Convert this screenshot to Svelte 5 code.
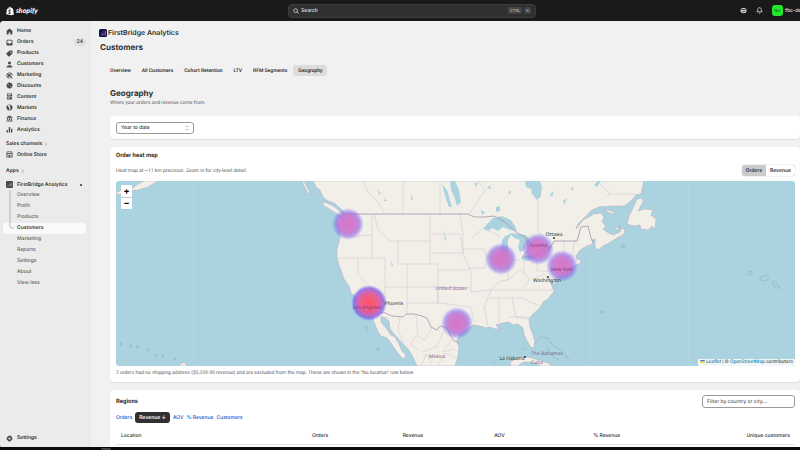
<script lang="ts">
  type NavItem = { label: string; icon: string; badge?: string };

  const mainNav: NavItem[] = [
    { label: "Home", icon: "home" },
    { label: "Orders", icon: "orders", badge: "24" },
    { label: "Products", icon: "products" },
    { label: "Customers", icon: "customers" },
    { label: "Marketing", icon: "marketing" },
    { label: "Discounts", icon: "discounts" },
    { label: "Content", icon: "content" },
    { label: "Markets", icon: "markets" },
    { label: "Finance", icon: "finance" },
    { label: "Analytics", icon: "analytics" },
  ];

  // 16x16 icons, filled with evenodd
  const icons: Record<string, string> = {
    home: "M8 1 L14.5 6.5 V13 a2 2 0 0 1-2 2 H10 V10.5 H6 V15 H3.500 a2 2 0 0 1-2-2 V6.500 Z",
    orders: "M4 1.500 H12 a3 3 0 0 1 3 3 V12 a3 3 0 0 1-3 3 H4 a3 3 0 0 1-3-3 V4.500 a3 3 0 0 1 3-3 Z M3 4.500 V9 H5.500 L7 11 H9 L10.500 9 H13 V4.500 a1 1 0 0 0-1-1 H4 a1 1 0 0 0-1 1 Z",
    products: "M8 1 H13 a2 2 0 0 1 2 2 V7.500 L8.500 14.500 a2 2 0 0 1-3 0 L1.500 10.500 a2 2 0 0 1 0-3 Z M11 3.500 a1.500 1.500 0 1 0 .1 0 Z",
    customers: "M8 1 a3.500 3.500 0 1 1-.1 0 Z M1.500 15 C1.500 11 4 9.500 8 9.500 S14.500 11 14.500 15 Z",
    marketing: "M8 1 a7 7 0 0 1 7 7 H13 a5 5 0 1 0-5 5 V15 A7 7 0 0 1 8 1 Z M8 4.500 A3.500 3.500 0 0 1 11.500 8 H9.500 L9 9.500 L7.500 11.500 A3.500 3.500 0 0 1 8 4.500 Z M9 9 L15 11 L12.800 12.300 L15 14.500 L14 15.500 L12 13.200 L10.800 15 Z",
    discounts: "M8 .5 L10 2.300 L12.800 2.200 L13.500 5 L15.500 7 L14.200 9.500 L14.300 12.200 L11.500 13 L9.500 15.300 L7 14.300 L4 14.500 L3 12 L.8 10 L1.800 7.500 L1.500 4.500 L4.200 3.500 L6 1.300 Z M6 5 a1 1 0 1 0 .1 0 Z M10 9 a1 1 0 1 0 .1 0 Z",
    content: "M4 1 H12 a2 2 0 0 1 2 2 V8 H2 V3 a2 2 0 0 1 2-2 Z M4 3 V6.500 L7 4.500 L9 6.500 L12 3 Z M2 9.500 H14 V13 a2 2 0 0 1-2 2 H4 a2 2 0 0 1-2-2 Z M4 11 V12.500 H9 V11 Z",
    markets: "M8 1 A7 7 0 1 1 7.900 1 Z M5 3 L4 6 L7 7.500 L8 10 L6.500 13.500 L8.500 13.800 L11 10 L9 7 L10 4 L8 2.800 Z",
    finance: "M8 1 L15 5 V6.500 H1 V5 Z M2.500 7.500 H5 V11.500 H2.500 Z M6.700 7.500 H9.300 V11.500 H6.700 Z M11 7.500 H13.500 V11.500 H11 Z M1 12.500 H15 V15 H1 Z",
    analytics: "M1.500 9 H4.500 V15 H1.500 Z M6.300 2 H9.600 V15 H6.300 Z M11.500 6 H14.500 V15 H11.500 Z",
    store: "M2 1 H14 L15 6 V13 a2 2 0 0 1-2 2 H3 a2 2 0 0 1-2-2 V6 Z M3 3 V5 H13 V3 Z M3 7.500 V13 H6 V9 H10 V13 H13 V7.500 Z",
    gear: "M6.500 1 H9.500 L10 3 L12 2.500 L14 5 L13 7 L15 8 L14 11 L12 11.500 L11.500 14 L9.500 15 L8 13.500 L6.500 15 L4 13.500 V11.500 L1.500 10.500 L1 7.500 L3 6.500 L2.500 4 L5 2.700 L6.500 3 Z M8 5.500 a2.500 2.500 0 1 0 .1 0 Z",
  };

  const appPages = ["Overview", "Profit", "Products", "Customers", "Marketing", "Reports", "Settings", "About", "View less"];
  const tabs = ["Overview", "All Customers", "Cohort Retention", "LTV", "RFM Segments", "Geography"];
  const sortKeys = ["Orders", "Revenue", "AOV", "% Revenue", "Customers"];
  const columns = ["Location", "Orders", "Revenue", "AOV", "% Revenue", "Unique customers"];

  const hotspots = [
    { x: 348, y: 224, r: 16, hot: false },
    { x: 369, y: 303, r: 18, hot: true },
    { x: 457, y: 323, r: 16, hot: false },
    { x: 501, y: 259, r: 16, hot: false },
    { x: 538, y: 249, r: 16, hot: false },
    { x: 562, y: 266, r: 16, hot: false },
  ];

  let activeTab = $state("Geography");
  let metric = $state("Orders");
  let sortBy = $state("Revenue");
  let filter = $state("");
</script>

{#snippet icon(name: string)}
  <svg class="icon" viewBox="0 0 16 16" aria-hidden="true"><path d={icons[name]} fill-rule="evenodd" /></svg>
{/snippet}

<div class="shell">
  <header class="topbar">
    <a class="logo" href="#home">
      <svg viewBox="0 0 16 18" aria-hidden="true">
        <path fill="#fff" d="M1.800 5 L4.500 4.200 C5 2 6.500 .5 8 .7 C9 .6 9.600 1.500 10 2.600 L11 2.300 L12.500 4 L14 4.200 L15.700 16 L11 17.500 L.3 15.500 Z" />
        <path fill="#1a1a1a" d="M9.800 6.500 L9.100 8.500 C7.500 7.800 6.500 8.300 6.600 9 C6.700 10 9.400 10.300 9.300 12.700 C9.200 15 6.600 15.600 4.500 14 L5 12.300 C6 13.200 7.200 13.400 7.300 12.600 C7.300 11.500 5 11.200 5 9 C5 6.700 7.300 5.500 9.800 6.500 Z M5.600 3.900 L8.800 2.900 C8.300 1 6.200 1.600 5.600 3.900 Z" />
      </svg>
      <span>shopify</span>
    </a>
    <button class="search">
      <svg viewBox="0 0 16 16" aria-hidden="true"><circle cx="7" cy="7" r="5" /><path d="M11 11 L15 15" /></svg>
      <span>Search</span>
      <kbd>CTRL</kbd><kbd>K</kbd>
    </button>
    <div class="account">
      <button class="bar-icon" aria-label="Sidekick">
        <svg viewBox="0 0 16 16"><path d="M2 5 Q3 2 8 2 T14 5 L15 9 Q14 14 8 14 T1 9 Z" fill="#ddd" /><path d="M3 6 H13 M5 10 Q8 12.500 11 10" stroke="#1a1a1a" stroke-width="2" fill="none" /></svg>
      </button>
      <button class="bar-icon" aria-label="Notifications">
        <svg viewBox="0 0 16 16"><path d="M8 1.500 C5 1.500 4 4 4 7 L2 11 H14 L12 7 C12 4 11 1.500 8 1.500 Z M6 13 Q8 16 10 13" stroke="#ddd" stroke-width="1.800" fill="none" /></svg>
      </button>
      <button class="user"><span class="avatar">fbc</span><span class="user-name">fbc-dev</span></button>
    </div>
  </header>

  <div class="body">
    <nav class="sidebar">
      <ul class="main-nav">
        {#each mainNav as item}
          <li>
            <a href="#{item.icon}">{@render icon(item.icon)}<span>{item.label}</span>
              {#if item.badge}<span class="badge">{item.badge}</span>{/if}
            </a>
          </li>
        {/each}
      </ul>

      <a class="group" href="#channels">Sales channels <svg viewBox="0 0 8 8"><path d="M2 1 L5 4 L2 7" /></svg></a>
      <a class="row" href="#store">{@render icon("store")}<span>Online Store</span></a>
      <a class="group apps" href="#apps">Apps <svg viewBox="0 0 8 8"><path d="M2 1 L5 4 L2 7" /></svg></a>
      <a class="row" href="#firstbridge">
        <svg class="icon" viewBox="0 0 16 16"><rect width="16" height="16" rx="3" /><path d="M4 12 V10 M7 12 V8 M10 12 V6 M13 12 V4" stroke="#aaa" stroke-width="1.500" /></svg>
        <span>FirstBridge Analytics</span>
        <span class="dot"></span>
      </a>
      <ul class="sub-nav">
        {#each appPages as page}
          <li><a href="#app-{page}" class:current={page === "Customers"}>{page}</a></li>
        {/each}
        <svg class="branch" viewBox="0 0 6 42" aria-hidden="true"><path d="M1 0 V36 Q1 38 3 38 H5" /></svg>
      </ul>
      <a class="row settings" href="#settings">{@render icon("gear")}<span>Settings</span></a>
    </nav>

    <main>
      <div class="app-name">
        <svg viewBox="0 0 16 16" aria-hidden="true"><rect width="16" height="16" rx="3" fill="#15133f" /><path d="M4 13 V11 M7 13 V9 M10 13 V7 M13 13 V4" stroke="#7d63dd" stroke-width="1.800" /><path d="M3 9 L12 3" stroke="#5548b0" /></svg>
        <span>FirstBridge Analytics</span>
      </div>
      <h1>Customers</h1>

      <div class="content">
        <div class="tabs">
          {#each tabs as tab}
            <button class:active={tab === activeTab} onclick={() => (activeTab = tab)}>{tab}</button>
          {/each}
        </div>

        <h2>Geography</h2>
        <p class="lead">Where your orders and revenue come from.</p>

        <section class="card range">
          <div class="select">
            <select aria-label="Date range"><option>Year to date</option></select>
            <svg viewBox="0 0 8 12" aria-hidden="true"><path d="M1.500 4 L4 1.500 L6.500 4 M1.500 8 L4 10.500 L6.500 8" /></svg>
          </div>
        </section>

        <section class="card heat">
          <h3>Order heat map</h3>
          <div class="heat-head">
            <p>Heat map at ~11 km precision. Zoom in for city-level detail.</p>
            <div class="segmented">
              {#each ["Orders", "Revenue"] as m}
                <button class:active={m === metric} onclick={() => (metric = m)}>{m}</button>
              {/each}
            </div>
          </div>

          <div class="map">
            <svg class="tiles" viewBox="116 181 679 185" preserveAspectRatio="xMidYMid slice" role="img" aria-label="Order heat map of North America">
              <defs>
                <radialGradient id="warm">
                  <stop offset="0" stop-color="#d66fc2" stop-opacity=".95" />
                  <stop offset=".55" stop-color="#c873cf" stop-opacity=".9" />
                  <stop offset=".75" stop-color="#8d66e4" stop-opacity=".6" />
                  <stop offset="1" stop-color="#6a5cff" stop-opacity="0" />
                </radialGradient>
                <radialGradient id="hot">
                  <stop offset="0" stop-color="#ff4a62" stop-opacity=".95" />
                  <stop offset=".4" stop-color="#f2557c" stop-opacity=".95" />
                  <stop offset=".7" stop-color="#c05bc0" stop-opacity=".9" />
                  <stop offset=".83" stop-color="#6f50e6" stop-opacity=".7" />
                  <stop offset="1" stop-color="#6a5cff" stop-opacity="0" />
                </radialGradient>
              </defs>
              <rect x="116" y="181" width="679" height="185" fill="#aad3df" />
              <path class="seam" d="M194 181 V366 M590 252 V366 M689 181 V366" />

              <g class="land">
                <path d="M313 181 L316 187 L320 190 L323 197 L328 201 L334 203 L340 208 L344 213 L346 217 L343 219 L337 217 L338 223 L340 229 L340 238 L337 249 L337 257 L339 265 L342 273 L344 279 L349 286 L351 293 L356 297 L357 303 L364 305 L367 310 L372 315 L374 322 L378 332 L381 336 L387 338 L391 343 L397 352 L401 357 L404 359 L406 355 L402 351 L398 342 L395 337 L391 335 L386 328 L381 322 L381 317 L385 318 L389 321 L390 329 L396 336 L402 343 L408 349 L413 357 L417 366 H455 L458 356 L459 348 L457 340 L460 334 L466 330 L473 325 L480 326 L486 328 L490 327 L495 329 L499 329 L496 325 L503 323 L509 322 L513 325 L518 324 L523 328 L524 334 L527 341 L531 347 L534 348 L535 342 L533 335 L530 327 L529 319 L533 314 L540 308 L543 302 L548 299 L551 295 L554 292 L552 286 L549 278 L553 282 L556 286 L555 278 L559 276 L563 271 L568 269 L574 266 L581 263 L580 259 L577 260 L576 256 L580 250 L587 246 L593 244 L592 240 L595 239 L595 247 L598 250 L603 246 L609 243 L617 238 L624 234 L625 230 L622 228 L620 232 L613 235 L607 232 L603 229 L606 226 L602 222 L604 217 L601 213 L594 214 L583 220 L576 229 L578 224 L585 217 L592 210 L599 207 L612 206 L624 206 L631 201 L636 195 L641 194 L644 181 Z" />
                <path d="M302 181 L304 181 L307 187 L311 194 L308 193 L304 186 Z M322 202 L327 203 L335 207 L343 214 L345 217 L339 215 L331 210 L324 206 Z" />
                <path d="M642 198 L643 202 L638 211 L644 209 L653 210 L651 215 L656 219 L655 229 L652 226 L648 230 L641 229 L640 225 L634 226 L627 224 L629 216 L633 208 L637 199 Z M604 209 L612 211 L616 214 L609 213 Z M613 226 L619 228 L621 226 L617 230 Z" />
                <path d="M116 193 L124 188 L130 190 L138 184 L144 181 H158 L148 187 L138 190 L129 191 L118 195 Z" />
                <path d="M510 362 L518 358 L528 357 L539 360 L548 363 L553 366 H541 L532 362 L523 362 L518 366 H511 Z M179 365 L184 362 L187 366 H180 Z" />
              </g>

              <g class="water">
                <path d="M483 229 L487 224 L493 218 L502 216 L511 220 L515 226 L517 231 L510 230 L503 227 L498 231 L492 228 L488 231 Z" />
                <path d="M502 241 L505 236 L512 233 L508 240 L508 253 L505 260 L502 258 L501 250 Z" />
                <path d="M510 233 L518 234 L526 235 L532 243 L526 243 L524 250 L520 252 L518 247 L520 240 L514 238 Z" />
                <path d="M521 259 L527 254 L534 255 L541 252 L536 258 L527 261 Z M539 250 L544 246 L552 246 L549 250 L542 252 Z" />
                <path d="M525 181 H540 L542 187 L541 196 L537 200 L532 194 L531 189 L526 187 Z" />
                <path d="M442 184 L447 190 L449 197 L452 207 L449 207 L446 199 Z M450 181 H455 L459 190 L461 202 L457 206 L454 196 L451 190 Z M496 207 L500 206 L500 211 L496 212 Z M481 210 L485 212 L482 215 Z" />
                <path d="M390 260 L393 265 L392 267 Z M443 229 L445 236 L447 241 L445 240 Z M594 185 L598 181 H601 L597 187 Z M563 201 L567 198 L564 205 Z M571 188 L574 187 L572 191 Z M487 188 L490 185 L491 189 Z M377 188 L381 194 L379 194 Z M411 194 L413 199 L411 200 Z M384 199 L388 201 L384 201 Z M550 194 L554 191 L552 197 Z M474 184 L478 182 L476 187 Z M508 192 L511 190 L510 195 Z" />
              </g>

              <path class="states" d="M362 181 L369 193 L377 201 L385 214 M403 181 V214 M440 181 V214 M478 181 L485 190 M485 190 L469 214 M538 200 V232 L545 238 M338 234 L346 237 L372 235 M372 214 V258 M374 214 L378 230 L387 238 L390 241 H398 V264 H438 V303 H407 M338 258 H385 V305 M358 258 V275 L385 302 L383 312 M398 241 H430 M430 214 V264 M430 234 H460 L463 253 H430 M460 214 L463 234 V253 L470 270 H438 M385 287 H438 L471 288 M407 264 V314 M438 290 V303 L448 304 L471 307 L474 322 M463 249 H484 L487 258 L485 268 H468 M471 270 V292 L491 290 L484 308 L488 326 M499 298 V323 M486 308 H484 M512 298 L516 317 L530 319 M509 317 H529 M490 298 H523 L530 302 L541 306 M490 290 H552 M491 290 L500 281 L508 280 L520 270 L530 279 L522 289 M508 260 V280 M520 260 H512 M524 260 V273 M537 257 V271 H556 M535 278 L544 274 L551 281 M564 240 V265 M575 240 L572 255 M566 256 H576 M472 238 L481 230 M488 230 L501 237 M600 184 L610 193 L607 197 M608 194 H636" />
              <path class="border" d="M345 214 H468 L474 217 L485 217 L494 216 L505 222 L516 232 L526 238 L529 250 L522 257 L535 257 L549 250 L554 241 H577 L581 227 L588 226 L591 238 L593 242 M381 313 L383 312 L392 316 L403 317 L406 314 L414 314 L422 316 L427 318 L431 327 L437 330 L440 326 L447 328 L453 340 L459 343" />
              <path class="states mexico" d="M381 317 L388 318 M400 317 L398 330 L404 344 M416 315 L418 334 L410 344 L418 350 M432 328 L425 340 L418 336 M445 328 L437 346 L423 352 M451 340 L443 352 L454 349 M421 366 L426 354 L432 364 M438 365 L445 353 L456 358" />
              <path class="rings" d="M120 343 h2 v2 h-2 Z M130 345 h2 v2 h-2 Z M136 346 h2 v2 h-2 Z M147 349 h2 v2 h-2 Z M155 354 l2 1 l-1 2 l-2 -1 Z M162 355 h2 v2 h-2 Z M174 358 h2 v2 h-2 Z M366 327 l2 1 l-1 3 l-2 -2 Z M377 348 h2 v2 h-2 Z M601 311 h3 v2 h-3 Z M621 246 l3 -1 l1 2 l-3 1 Z M749 271 l3 1 l-1 3 l-3 -1 Z M760 277 l6 -2 l3 3 l-3 3 l-6 -1 Z M773 281 l4 2 l3 5 l-4 0 l-4 -5 Z M533 345 l7 -8 l8 1 l4 7 l9 5 l10 12 M547 346 l4 9 l8 5 M492 360 l3 3 M521 349 h4" />

              {#each hotspots as spot}
                <circle cx={spot.x} cy={spot.y} r={spot.r} fill={spot.hot ? "url(#hot)" : "url(#warm)"} />
              {/each}

              <g class="country">
                <text x="451" y="290">United States</text>
                <text x="437" y="358">México</text>
                <text x="547" y="355">The Bahamas</text>
                <text x="537" y="364">Cuba</text>
              </g>
              <g class="city">
                <text x="394" y="305">Phoenix</text>
                <text x="554" y="236">Ottawa</text>
                <text x="547" y="282">Washington</text>
                <text x="512" y="360">La Habana</text>
                <circle cx="554" cy="238" r="1" />
                <circle cx="548" cy="277" r="1" />
                <circle cx="525" cy="357" r="1" />
              </g>
              <g class="under">
                <text x="367" y="309">Los Angeles</text>
                <text x="538" y="247">Toronto</text>
                <text x="562" y="271">New York</text>
              </g>
            </svg>
            <div class="zoom">
              <button aria-label="Zoom in">+</button>
              <button aria-label="Zoom out">−</button>
            </div>
            <div class="attribution">
              <svg viewBox="0 0 12 8" aria-hidden="true"><path fill="#4c7be1" d="M0 0h12v4H0z" /><path fill="#ffd500" d="M0 4h12v4H0z" /></svg>
              <a href="#leaflet">Leaflet</a> | © <a href="#osm">OpenStreetMap</a> contributors
            </div>
          </div>
          <p class="note">2 orders had no shipping address ($5,259.90 revenue) and are excluded from the map. These are shown in the "No location" row below.</p>
        </section>

        <section class="card regions">
          <div class="regions-head">
            <h3>Regions</h3>
            <input type="text" aria-label="Filter regions" placeholder="Filter by country or city..." bind:value={filter} />
          </div>
          <div class="sorts">
            {#each sortKeys as key}
              <button class:active={key === sortBy} onclick={() => (sortBy = key)}>{key}{key === sortBy ? " ↓" : ""}</button>
            {/each}
          </div>
          <table>
            <thead>
              <tr>{#each columns as col}<th scope="col">{col}</th>{/each}</tr>
            </thead>
          </table>
        </section>
      </div>
    </main>
  </div>
  <footer><span></span></footer>
</div>

<style>
  :global(body) {
    background: #1a1a1a;
  }

  .shell {
    display: grid;
    grid-template-rows: 21px minmax(0, 1fr) 3px;
    height: 100vh;
    overflow: hidden;
    font: 500 5px/8px Inter, "Liberation Sans", sans-serif;
    text-rendering: geometricPrecision;
    color: #303030;
  }

  button, input, select {
    font: inherit;
    color: inherit;
    text-rendering: inherit;
    margin: 0;
    padding: 0;
    border: 0;
    background: none;
    box-sizing: border-box;
  }

  a {
    color: inherit;
    text-decoration: none;
  }

  ul {
    list-style: none;
    margin: 0;
    padding: 0;
  }

  h1, h2, h3, p {
    margin: 0;
  }

  svg {
    display: block;
  }

  /* top bar */
  .topbar {
    display: grid;
    grid-template-columns: 36% 31% minmax(0, 1fr);
    align-items: center;
    color: #e3e3e3;
    overflow: hidden;
  }

  .logo {
    display: flex;
    align-items: center;
    gap: 2px;
    padding-left: 6px;
    font-family: Lato, sans-serif;
    font-size: 7px;
    font-weight: 900;
    font-style: italic;
    color: #fff;
  }

  .logo svg {
    width: 8px;
    height: 10px;
  }

  .search {
    display: flex;
    align-items: center;
    gap: 2px;
    height: 14px;
    padding: 0 4px;
    border: 1px solid #3d3d3d;
    border-radius: 4px;
    background: #303030;
  }

  .search svg {
    width: 6px;
    height: 6px;
    fill: none;
    stroke: #e3e3e3;
    stroke-width: 2;
  }

  .search span {
    flex: 1;
    text-align: left;
  }

  kbd {
    padding: 0 2px;
    border-radius: 2px;
    background: #444;
    color: #b5b5b5;
    font: 500 4px/7px Inter, sans-serif;
  }

  .account {
    display: flex;
    align-items: center;
    justify-content: flex-end;
    gap: 9px;
  }

  .bar-icon svg {
    width: 7px;
    height: 7px;
  }

  .user {
    display: flex;
    align-items: center;
    gap: 2px;
    width: 28px;
    overflow: hidden;
    white-space: nowrap;
  }

  .avatar {
    flex: none;
    width: 11px;
    border-radius: 3px;
    background: #26e52f;
    color: #0c6b12;
    font-size: 4px;
    line-height: 11px;
  }

  .body {
    display: grid;
    grid-template-columns: 91px minmax(0, 1fr);
    border-radius: 4px 0 0 2px;
    overflow: hidden;
    background: #f1f1f1;
  }

  /* sidebar */
  .sidebar {
    display: flex;
    flex-direction: column;
    box-sizing: border-box;
    padding: 5px 5px 4px 3px;
    background: #ebebeb;
    font-weight: 600;
  }

  .main-nav {
    display: grid;
    grid-template-rows: repeat(10, 1fr);
    height: 109px;
  }

  .main-nav a, .row {
    display: flex;
    align-items: center;
    gap: 4px;
    height: 100%;
    padding-left: 3px;
  }

  .row {
    flex: none;
    height: 11px;
  }

  .icon {
    width: 7px;
    height: 7px;
    fill: #4a4a4a;
  }

  .badge {
    margin-left: auto;
    padding: 0 3px;
    border-radius: 4px;
    background: #dfdfdf;
    font-weight: 500;
  }

  .group {
    display: flex;
    align-items: center;
    gap: 2px;
    height: 10px;
    padding: 4px 0 0 3px;
  }

  .apps {
    padding: 6px 0 3px 3px;
  }

  .group svg {
    width: 4px;
    height: 4px;
    fill: none;
    stroke: #616161;
  }

  .dot {
    width: 2px;
    height: 2px;
    margin: 0 4px 0 auto;
    border-radius: 1px;
    background: #303030;
  }

  .sub-nav {
    position: relative;
    display: grid;
    grid-template-rows: repeat(9, 1fr);
    height: 98px;
    font-weight: 500;
    color: #616161;
  }

  .sub-nav a {
    display: flex;
    align-items: center;
    height: 100%;
    padding-left: 14px;
    border-radius: 3px;
  }

  .sub-nav a.current {
    background: #fafafa;
    color: #303030;
    font-weight: 600;
  }

  .branch {
    position: absolute;
    left: 6px;
    top: 0;
    width: 6px;
    height: 42px;
    fill: none;
    stroke: #b5b5b5;
  }

  .settings {
    margin: auto 0 2px;
  }

  /* page */
  main {
    padding: 7px 0 0 8px;
    min-width: 0;
  }

  .app-name {
    display: flex;
    align-items: center;
    gap: 1px;
    font-size: 7px;
    line-height: 9px;
    font-weight: 600;
  }

  .app-name svg {
    width: 8px;
    height: 8px;
  }

  h1 {
    padding: 5px 0 0 1px;
    font-size: 8px;
    line-height: 10px;
    font-weight: 700;
  }

  .content {
    padding: 13px 0 0 11px;
  }

  .tabs {
    display: flex;
    gap: 1px;
    margin-left: -5px;
    font-family: Roboto, Inter, sans-serif;
  }

  .tabs button {
    height: 11px;
    padding: 0 5px;
    border-radius: 3px;
    font-weight: 600;
  }

  .tabs button.active {
    background: #dcdcdc;
  }

  h2 {
    margin-top: 12px;
    font-size: 8px;
    line-height: 11px;
    font-weight: 700;
  }

  .lead, .heat-head p, .note {
    color: #616161;
    font-family: Roboto, Inter, sans-serif;
    font-weight: 400;
  }

  .card {
    margin-top: 8px;
    padding: 5px 5px 5px 6px;
    border-radius: 4px;
    background: #fff;
    box-shadow: 0 1px 0 #dedede;
  }

  .range {
    padding-top: 6px;
    margin-top: 9px;
  }

  .select {
    position: relative;
    width: 78px;
  }

  select {
    display: block;
    width: 100%;
    height: 12px;
    padding-left: 4px;
    border: 1px solid #9a9a9a;
    border-radius: 3px;
    appearance: none;
    background: #fff;
  }

  .select svg {
    position: absolute;
    right: 5px;
    top: 3px;
    width: 4px;
    height: 6px;
    fill: none;
    stroke: #616161;
  }

  h3 {
    font-family: Roboto, Inter, sans-serif;
    font-size: 6px;
    line-height: 8px;
    font-weight: 700;
  }

  .heat-head {
    display: flex;
    align-items: center;
    justify-content: space-between;
    padding: 5px 0;
  }

  .segmented {
    display: flex;
    border-radius: 3px;
    box-shadow: 0 0 1px #777;
    overflow: hidden;
  }

  .segmented button {
    height: 11px;
    padding: 0 4px;
    font-weight: 600;
  }

  .segmented button.active {
    background: #cbcbcb;
  }

  .map {
    position: relative;
    height: 185px;
    border-radius: 3px;
    overflow: hidden;
  }

  .tiles {
    width: 100%;
    height: 100%;
  }

  .land {
    fill: #f2efe9;
    stroke: #b9a9bc;
    stroke-width: .5;
  }

  .water {
    fill: #aad3df;
  }

  .states, .border, .rings, .seam {
    fill: none;
    stroke: #cdbfce;
    stroke-width: .5;
  }

  .border {
    stroke: #a894aa;
    stroke-width: .8;
  }

  .rings {
    stroke: #8fa5bb;
  }

  .seam {
    stroke: #b9dce6;
  }

  .tiles text {
    font: 400 5px "Noto Sans", sans-serif;
    text-anchor: middle;
  }

  .country text {
    fill: #87608c;
  }

  .city {
    fill: #333;
  }

  .under text {
    fill: #8a3a72;
  }

  .zoom {
    position: absolute;
    left: 5px;
    top: 4px;
    width: 11px;
    border-radius: 1px;
    background: #fff;
  }

  .zoom button {
    display: block;
    width: 100%;
    height: 12px;
    font-size: 9px;
    line-height: 11px;
    font-weight: 700;
    color: #000;
  }

  .zoom button + button {
    border-top: 1px solid #ccc;
  }

  .attribution {
    position: absolute;
    right: 0;
    bottom: 0;
    padding: 0 2px;
    background: #f0f6f8;
    font: 5px/7px Roboto, "Liberation Sans", sans-serif;
  }

  .attribution svg {
    display: inline-block;
    width: 5px;
    height: 3px;
  }

  .attribution a {
    color: #0078a8;
  }

  .note {
    padding-top: 3px;
  }

  .regions-head {
    display: flex;
    align-items: center;
    justify-content: space-between;
  }

  input {
    width: 93px;
    height: 13px;
    padding: 0 4px;
    border: 1px solid #9a9a9a;
    border-radius: 3px;
  }

  input::placeholder {
    color: #616161;
  }

  .sorts {
    display: flex;
    align-items: center;
    gap: 3px;
    padding-top: 4px;
    color: #005bd3;
  }

  .sorts button.active {
    height: 11px;
    padding: 0 4px;
    border-radius: 3px;
    background: #303030;
    color: #fff;
    font-weight: 600;
  }

  table {
    width: 100%;
    margin-top: 5px;
    border-collapse: collapse;
    table-layout: fixed;
  }

  th {
    box-sizing: border-box;
    height: 16px;
    padding: 0 5px;
    border-bottom: 1px solid #e3e3e3;
    text-align: right;
    font-weight: 500;
  }

  th:first-child {
    width: 17%;
    text-align: left;
  }

  th:nth-child(2) {
    width: 15%;
  }

  th:nth-child(3) {
    width: 14%;
  }

  th:nth-child(4) {
    width: 12%;
  }

  th:nth-child(5) {
    width: 17%;
  }

  footer {
    background: #0c0a10;
  }

  footer span {
    display: block;
    width: 10px;
    height: 2px;
    margin: 1px 0 0 101px;
    border-radius: 2px;
    background: #444;
  }
</style>
